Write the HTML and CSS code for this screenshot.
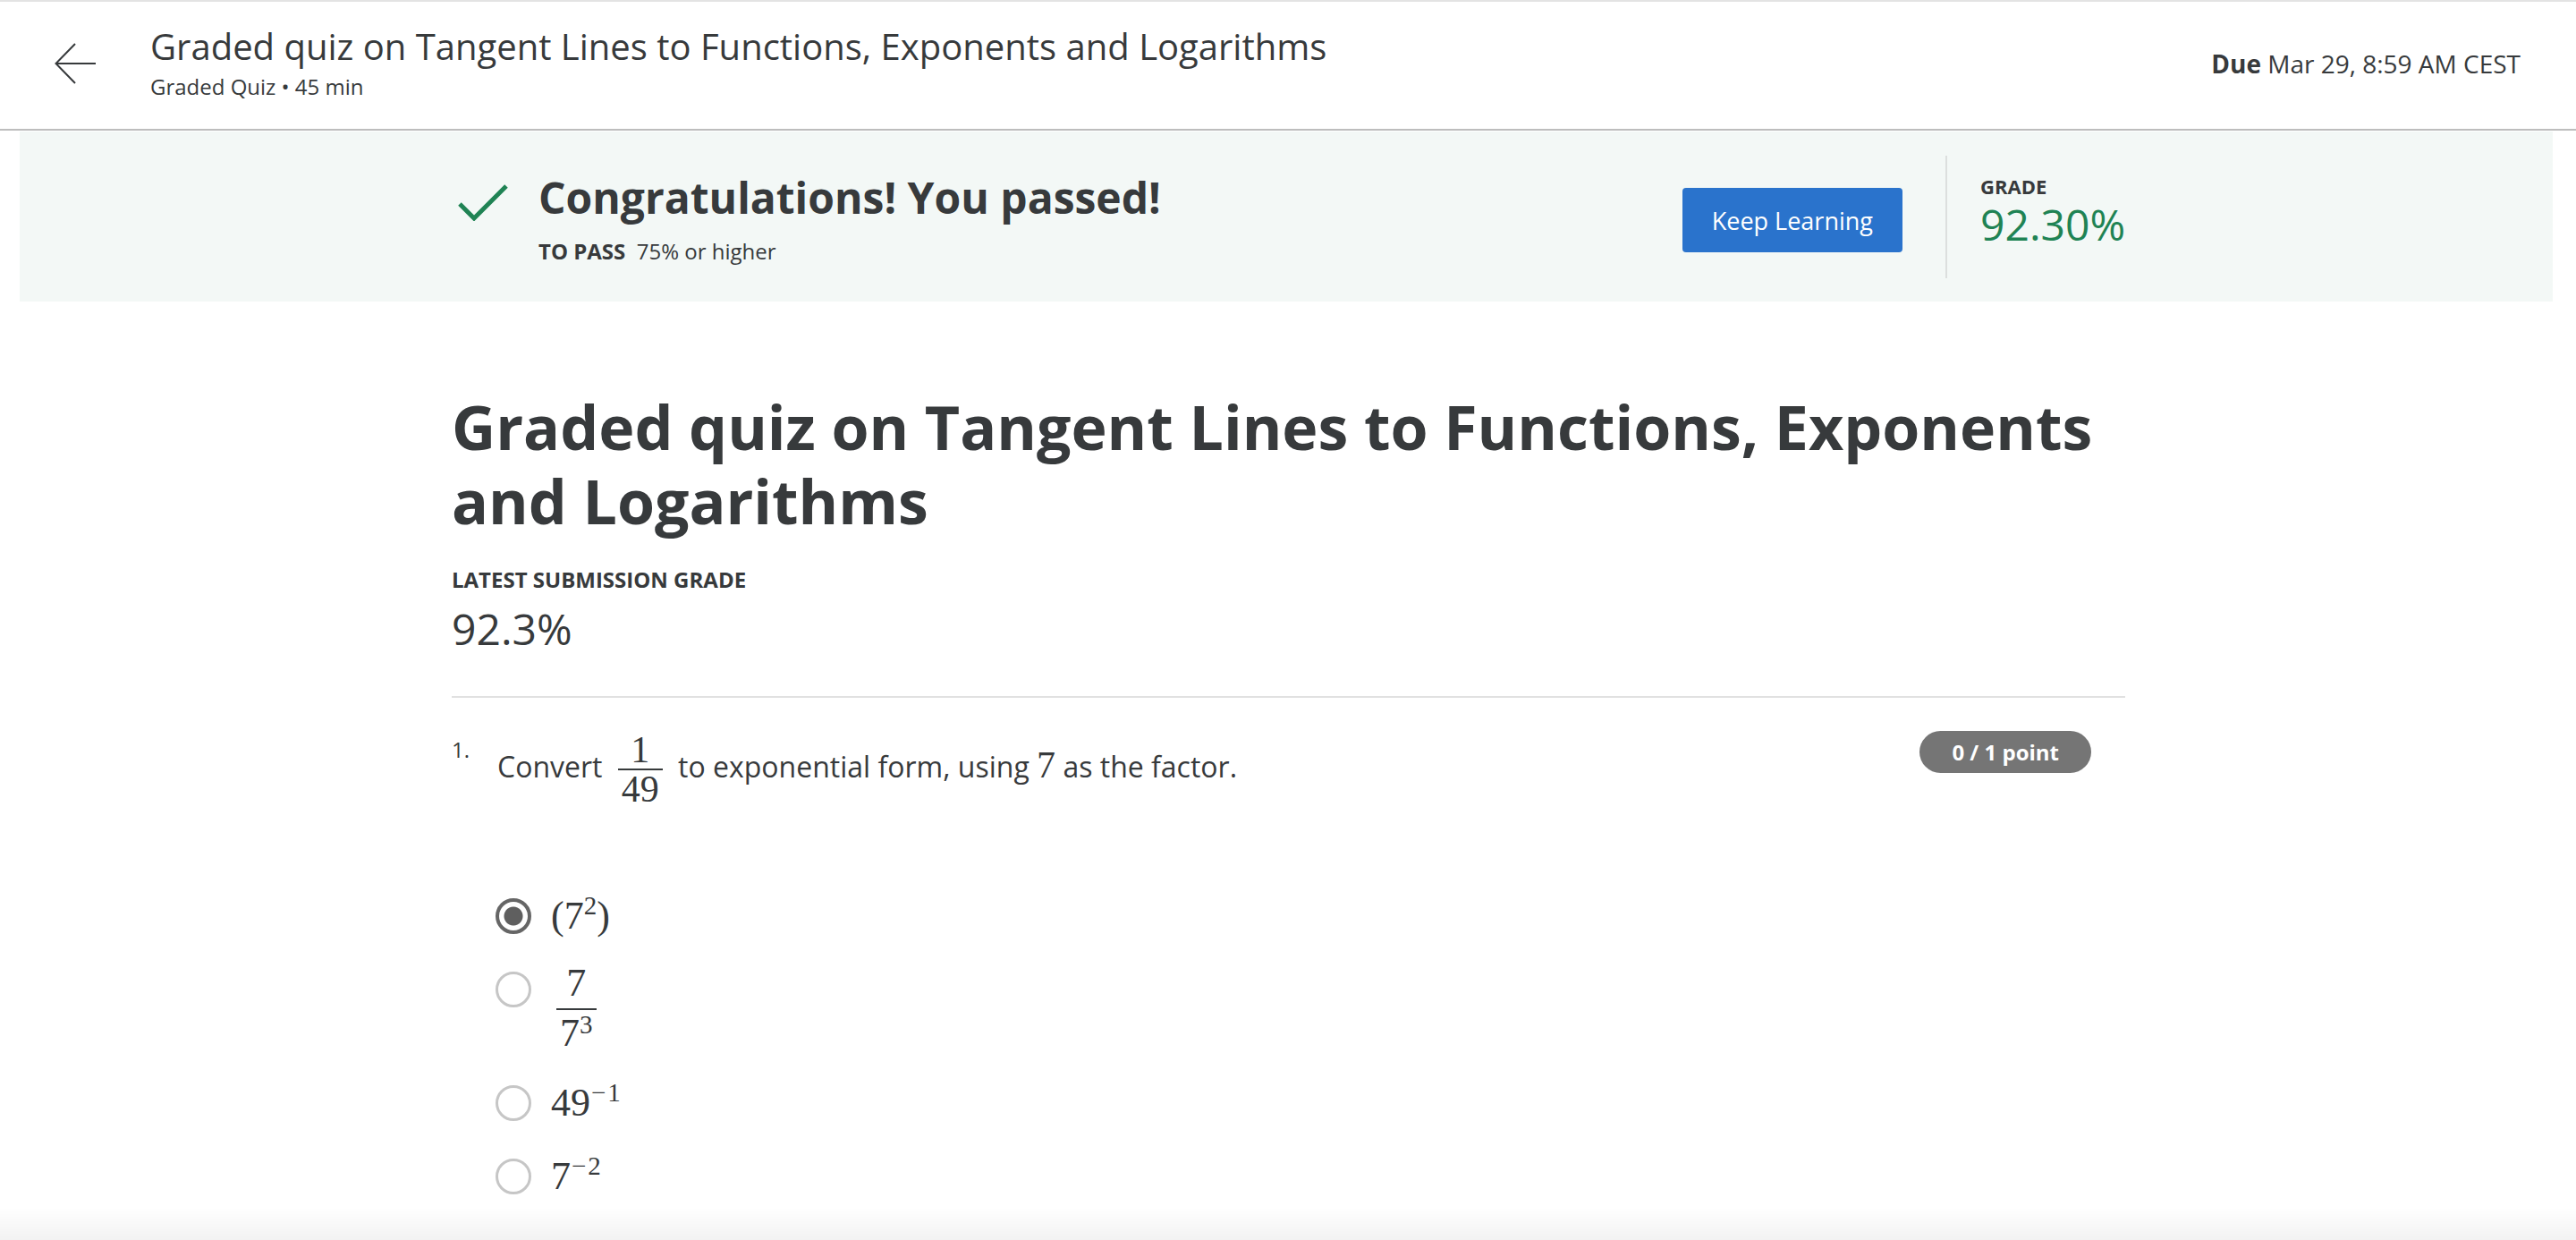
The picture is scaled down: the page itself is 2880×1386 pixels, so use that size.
FILE: index.html
```html
<!DOCTYPE html>
<html lang="en">
<head>
<meta charset="utf-8">
<title>Graded quiz on Tangent Lines to Functions, Exponents and Logarithms</title>
<link rel="stylesheet" href="styles.css">
</head>
<body>
<header class="topbar">
  <div class="back">
    <svg width="46" height="46" viewBox="0 0 46 46" aria-hidden="true">
      <path d="M23 1 L1.5 23 L23 45 M1.5 23 H46" fill="none" stroke="#373a3c" stroke-width="2"/>
    </svg>
  </div>
  <div class="topbar-titles">
    <div class="topbar-title">Graded quiz on Tangent Lines to Functions, Exponents and Logarithms</div>
    <div class="topbar-sub">Graded Quiz • 45 min</div>
  </div>
  <div class="due"><b>Due</b> Mar 29, 8:59 AM CEST</div>
</header>

<section class="banner">
  <div class="banner-inner">
    <div class="pass">
      <svg class="check" width="56" height="42" viewBox="0 0 56 42" aria-hidden="true">
        <polyline points="2,23 18,39 54,3" fill="none" stroke="#1f8354" stroke-width="5"/>
      </svg>
      <div class="pass-text">
        <div class="pass-title">Congratulations! You passed!</div>
        <div class="pass-req"><b>TO PASS</b>&nbsp;&nbsp;75% or higher</div>
      </div>
    </div>
    <button class="keep">Keep Learning</button>
    <div class="vdivider"></div>
    <div class="grade">
      <div class="grade-label">GRADE</div>
      <div class="grade-value">92.30%</div>
    </div>
  </div>
</section>

<main class="content">
  <h1 class="quiz-title">Graded quiz on Tangent Lines to Functions, Exponents and Logarithms</h1>
  <div class="latest-label">LATEST SUBMISSION GRADE</div>
  <div class="latest-value">92.3%</div>
  <hr class="sep">

  <div class="question">
    <div class="qnum">1.</div>
    <div class="qtext">Convert <span class="frac"><span class="num">1</span><span class="bar"></span><span class="den">49</span></span> to exponential form, using <span class="m">7</span> as the factor.</div>
    <div class="points">0 / 1 point</div>
  </div>

  <ul class="options">
    <li class="option">
      <span class="radio selected"></span>
      <span class="math">(7<sup>2</sup>)</span>
    </li>
    <li class="option">
      <span class="radio"></span>
      <span class="math"><span class="ofrac"><span class="onum">7</span><span class="bar"></span><span class="oden">7<sup>3</sup></span></span></span>
    </li>
    <li class="option">
      <span class="radio"></span>
      <span class="math">49<sup><span class="minus">−</span>1</sup></span>
    </li>
    <li class="option">
      <span class="radio"></span>
      <span class="math">7<sup><span class="minus">−</span>2</sup></span>
    </li>
  </ul>
</main>
<div class="bottom-fade"></div>
</body>
</html>
```

FILE: styles.css
```css
* { box-sizing: border-box; }
html, body { margin: 0; padding: 0; background: #fff; }
body {
  font-family: "Open Sans", "Noto Sans", sans-serif;
  color: #373a3c;
  overflow: hidden;
}

/* top bar */
.topbar {
  height: 146px;
  border-top: 2px solid #e3e3e3;
  border-bottom: 2px solid #bdbdbd;
  display: flex;
  align-items: flex-start;
  padding: 24px 62px 0 61px;
}
.back { width: 46px; height: 46px; margin-top: 22px; flex: none; }
.back svg { display: block; }
.topbar-titles { margin-left: 61px; flex: 1; }
.topbar-title { font-size: 40px; line-height: 52px; }
.topbar-sub { font-size: 24px; line-height: 32px; margin-top: 3px; }
.due { font-size: 28px; line-height: 38px; margin-top: 26px; }
.due b { font-weight: 700; }

/* banner */
.banner {
  height: 190px;
  margin: 1px 26px 0 22px;
  background: #f3f8f6;
}
.banner-inner {
  width: 1872px;
  height: 100%;
  margin: 0 auto;
  display: flex;
  align-items: center;
}
.pass { flex: 1; display: flex; align-items: flex-start; }
.check { display: block; margin: 16px 0 0 10px; flex: none; }
.pass-text { margin-left: 34px; }
.pass-title { font-size: 48px; line-height: 64px; font-weight: 700; }
.pass-req { font-size: 24px; line-height: 30px; margin-top: 13px; }
.pass-req b { font-weight: 700; }
.keep {
  font-family: "Open Sans", sans-serif;
  font-size: 27px;
  height: 72px;
  padding: 0 33px;
  margin-top: 8px;
  background: #2a73cc;
  color: #fff;
  border: 0;
  border-radius: 4px;
}
.vdivider { width: 2px; height: 137px; background: #dcdfde; margin-left: 48px; }
.grade { align-self: flex-start; margin: 46px 0 0 37px; width: 160px; }
.grade-label { font-size: 22px; line-height: 30px; font-weight: 700; }
.grade-value { font-size: 48px; line-height: 56px; color: #1f8354; }

/* content */
.content { width: 1872px; margin: 0 auto; padding-left: 1px; }
.quiz-title {
  margin: 98px 0 0;
  font-size: 68px;
  line-height: 83px;
  font-weight: 700;
}
.latest-label { margin-top: 32px; font-size: 24px; line-height: 30px; font-weight: 700; }
.latest-value { margin-top: 10px; font-size: 48px; line-height: 60px; }
.sep { margin: 45px 0 0; border: 0; height: 2px; background: #e1e1e1; }

.question { display: flex; align-items: flex-start; margin-top: 37px; }
.qnum { width: 51px; font-size: 24px; line-height: 32px; margin-top: 5px; flex: none; }
.qtext { flex: 1; font-size: 32px; line-height: 44px; }
.frac {
  display: inline-flex;
  flex-direction: column;
  align-items: center;
  vertical-align: middle;
  margin: 0 9px 0 9px;
  font-family: "Liberation Serif", "Times New Roman", serif;
  font-size: 42px;
}
.frac .num, .frac .den { line-height: 42px; padding: 0 4px; }
.bar { display: block; align-self: stretch; height: 2px; background: #373a3c; }
.m { font-family: "Liberation Serif", "Times New Roman", serif; font-size: 42px; line-height: 0; }
.points {
  flex: none;
  margin-right: 38px;
  height: 47px;
  padding: 0 36px;
  border-radius: 24px;
  background: #757575;
  color: #fff;
  font-size: 24px;
  font-weight: 700;
  line-height: 47px;
}

.options { list-style: none; margin: 97px 0 0 49px; padding: 0; display: flex; flex-direction: column; gap: 34px; }
.option { display: flex; align-items: flex-start; min-height: 48px; }
.radio {
  flex: none;
  width: 40px;
  height: 40px;
  margin-top: 4px;
  border-radius: 50%;
  border: 3px solid #c6c6c6;
  background: #fff;
}
.radio.selected {
  border: 4px solid #666;
  background: radial-gradient(circle, #5f5f5f 0 10px, #fff 11px);
}
.math {
  margin-left: 22px;
  font-family: "Liberation Serif", "Times New Roman", serif;
  font-size: 44px;
  line-height: 48px;
  color: #373a3c;
}
.math sup { font-size: 29px; line-height: 0; vertical-align: 16px; }
.minus { margin: 0 2px 0 1px; }
.ofrac {
  display: inline-flex;
  flex-direction: column;
  align-items: center;
  margin: -5px 0 0 6px;
  vertical-align: top;
}
.onum { line-height: 44px; padding-bottom: 6px; }
.oden { line-height: 40px; padding: 6px 4px 0; }
.ofrac .oden sup { vertical-align: 14px; }

.bottom-fade {
  position: fixed;
  left: 0; right: 0; bottom: 0;
  height: 36px;
  background: linear-gradient(to bottom, rgba(0,0,0,0), rgba(0,0,0,0.05));
  pointer-events: none;
}
```
